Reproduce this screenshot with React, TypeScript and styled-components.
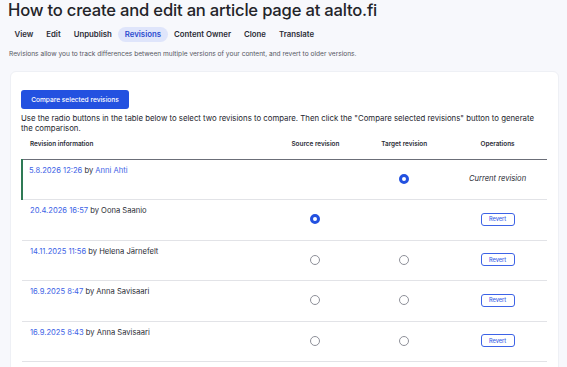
import React from "react";
import styled, { createGlobalStyle } from "styled-components";

const Global = createGlobalStyle`
  html, body { margin: 0; padding: 0; background: #f7f8fc; }
  body { font-family: Inter, "Noto Sans", sans-serif; color: #222330; }
  * { box-sizing: border-box; }
`;

const Page = styled.div`
  padding: 0 8px 0 8px;
`;

const Title = styled.h1`
  margin: 0;
  font-size: 16.6px;
  line-height: 20px;
  font-weight: 500;
  letter-spacing: -0.2px;
  color: #232429;
`;

const Tabs = styled.nav`
  display: flex;
  margin-top: 7px;
  height: 15px;
  align-items: center;
`;

const Tab = styled.a<{ $active?: boolean }>`
  font-size: 7.8px;
  font-weight: 600;
  padding: 0 6.5px;
  height: 15px;
  line-height: 15px;
  border-radius: 8px;
  background: ${(p) => (p.$active ? "#dfe5fb" : "transparent")};
  color: ${(p) => (p.$active ? "#2a4bcf" : "#2b2d36")};
`;

const Desc = styled.p`
  margin: 8px 0 0 1px;
  font-size: 6.6px;
  line-height: 9px;
  color: #555762;
`;

const Card = styled.section`
  margin: 12px 0 0 2px;
  width: 549px;
  background: #fff;
  border-radius: 6px;
  border: 1px solid #eef0f5;
  padding: 18px 11px 24px 10px;
`;

const Button = styled.button`
  display: block;
  height: 19px;
  width: 108px;
  padding: 0;
  border: none;
  border-radius: 3px;
  background: #2351e0;
  color: #fff;
  font-family: Inter, sans-serif;
  font-size: 6.6px;
  font-weight: 500;
`;

const Help = styled.p`
  margin: 4px 0 0 0;
  font-size: 7.8px;
  line-height: 10px;
  color: #24262e;
`;

const Table = styled.table`
  width: 526px;
  border-collapse: collapse;
  margin-top: 2px;
`;

const Th = styled.th<{ $center?: boolean; $w: number }>`
  width: ${(p) => p.$w}px;
  font-size: 6.4px;
  font-weight: 600;
  color: #2b2d36;
  text-align: ${(p) => (p.$center ? "center" : "left")};
  padding: 0 0 5px ${(p) => (p.$center ? 0 : 8)}px;
  height: 24px;
  border-bottom: 1px solid #6b6e78;
`;

const Tr = styled.tr`
  height: 40.5px;
  border-bottom: 1px solid #e2e3e7;
`;

const InfoTd = styled.td<{ $current?: boolean }>`
  vertical-align: top;
  padding: 6px 0 0 ${(p) => (p.$current ? 6 : 8)}px;
  font-size: 7.6px;
  line-height: 10px;
  color: #2b2d36;
  border-left: ${(p) => (p.$current ? "2px solid #2f7a55" : "none")};
`;

const Td = styled.td`
  text-align: center;
  vertical-align: middle;
  padding: 0 0 1px 0;
`;

const Link = styled.a`
  color: #3d63e6;
`;

const Radio = styled.span<{ $checked?: boolean }>`
  display: block;
  margin: 0 auto;
  width: 10px;
  height: 10px;
  border-radius: 50%;
  border: ${(p) => (p.$checked ? "3px solid #2351e0" : "1px solid #8e9099")};
  background: #fff;
`;

const Revert = styled.button`
  display: block;
  margin: 0 auto;
  width: 34px;
  height: 13px;
  padding: 0;
  border: 1.3px solid #3d63e6;
  border-radius: 3px;
  background: #fff;
  color: #3d63e6;
  font-family: Inter, sans-serif;
  font-size: 5.6px;
  font-weight: 500;
`;

const Current = styled.em`
  display: block;
  font-size: 7.6px;
  line-height: 10px;
  color: #2b2d36;
`;

type Row = {
  date: string;
  author: string;
  authorLink?: boolean;
  source?: "none" | "on" | "off";
  target?: "on" | "off" | "none";
  current?: boolean;
};

const rows: Row[] = [
  { date: "5.8.2026 12:26", author: "Anni Ahti", authorLink: true, source: "none", target: "on", current: true },
  { date: "20.4.2026 16:57", author: "Oona Saanio", source: "on", target: "none" },
  { date: "14.11.2025 11:56", author: "Helena Järnefelt", source: "off", target: "off" },
  { date: "16.9.2025 8:47", author: "Anna Savisaari", source: "off", target: "off" },
  { date: "16.9.2025 8:43", author: "Anna Savisaari", source: "off", target: "off" },
];

const RadioCell = ({ v }: { v?: "on" | "off" | "none" }) => (
  <Td>{v === "none" ? null : <Radio $checked={v === "on"} />}</Td>
);

export default function App() {
  return (
    <>
      <Global />
      <Page>
        <Title>How to create and edit an article page at aalto.fi</Title>
        <Tabs>
          <Tab>View</Tab>
          <Tab>Edit</Tab>
          <Tab>Unpublish</Tab>
          <Tab $active>Revisions</Tab>
          <Tab>Content Owner</Tab>
          <Tab>Clone</Tab>
          <Tab>Translate</Tab>
        </Tabs>
        <Desc>Revisions allow you to track differences between multiple versions of your content, and revert to older versions.</Desc>
        <Card>
          <Button>Compare selected revisions</Button>
          <Help>
            Use the radio buttons in the table below to select two revisions to compare. Then click the "Compare selected revisions" button to generate the comparison.
          </Help>
          <Table>
            <thead>
              <tr>
                <Th $w={249}>Revision information</Th>
                <Th $w={90} $center>Source revision</Th>
                <Th $w={88} $center>Target revision</Th>
                <Th $w={99} $center>Operations</Th>
              </tr>
            </thead>
            <tbody>
              {rows.map((r, i) => (
                <Tr key={i}>
                  <InfoTd $current={r.current}>
                    <Link>{r.date}</Link> by {r.authorLink ? <Link>{r.author}</Link> : r.author}
                  </InfoTd>
                  <RadioCell v={r.source} />
                  <RadioCell v={r.target} />
                  <Td>{r.current ? <Current>Current revision</Current> : <Revert>Revert</Revert>}</Td>
                </Tr>
              ))}
            </tbody>
          </Table>
        </Card>
      </Page>
    </>
  );
}
